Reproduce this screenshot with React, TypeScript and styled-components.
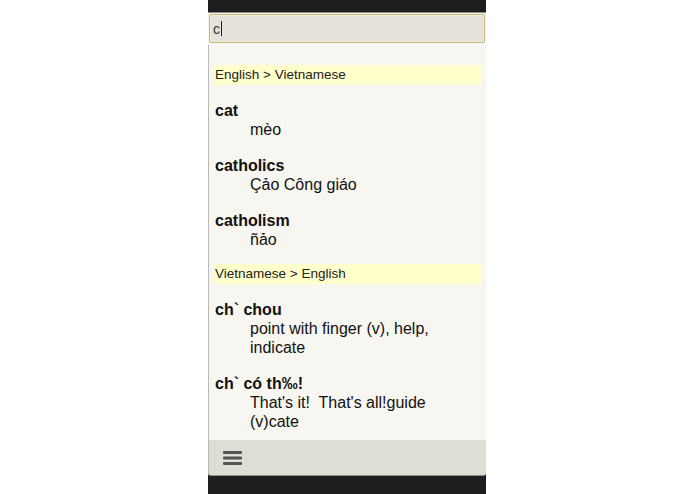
import React from "react";
import styled, { createGlobalStyle } from "styled-components";

const GlobalStyle = createGlobalStyle`
  html, body {
    margin: 0;
    padding: 0;
    background: #ffffff;
  }
  body {
    font-family: "Liberation Sans", Arial, sans-serif;
  }
`;

const Page = styled.div`
  width: 695px;
  height: 494px;
  display: flex;
  justify-content: flex-start;
`;

const Phone = styled.div`
  margin-left: 208px;
  width: 278px;
  height: 494px;
  display: flex;
  flex-direction: column;
  background: #1e1e1e;
`;

const StatusBar = styled.div`
  height: 12px;
  background: #1e1e1e;
  border-bottom: 1px solid #8a8a88;
`;

const SearchArea = styled.div`
  background: #f8f6f0;
  padding: 1px 1px 2px 1px;
`;

const SearchField = styled.div`
  height: 27px;
  border: 1px solid #c6b67a;
  box-shadow: inset 0 0 0 1px #f0ecd8;
  background: #e4e2db;
  border-radius: 2px;
  display: flex;
  align-items: center;
  padding-left: 3px;
  font-size: 14px;
  color: #333;
`;

const Caret = styled.span`
  display: inline-block;
  width: 1px;
  height: 15px;
  background: #222;
  margin-left: 1px;
`;

const Content = styled.div`
  flex: 1;
  background: #f8f6f0;
  border-left: 1px solid #b9b8b4;
  padding: 20px 5px 0 5px;
  overflow: hidden;
`;

const SectionHeader = styled.div<{ $first?: boolean }>`
  height: 20px;
  line-height: 20px;
  background: #ffffcc;
  font-size: 13.5px;
  color: #222;
  padding-left: 1px;
  margin-bottom: 16px;
  margin-top: ${(p) => (p.$first ? "0" : "15px")};
`;

const Entry = styled.div`
  & + & {
    margin-top: 17px;
  }
`;

const Word = styled.div`
  font-size: 16px;
  line-height: 19px;
  font-weight: bold;
  color: #111;
  padding-left: 1px;
`;

const Meaning = styled.div`
  font-size: 16px;
  line-height: 19px;
  color: #111;
  padding-left: 36px;
`;

const BottomBar = styled.div`
  height: 35px;
  background: #deddd6;
  border-left: 1px solid #b9b8b4;
  border-bottom: 1px solid #8e8d88;
  border-radius: 0 0 3px 3px;
  display: flex;
  align-items: center;
  padding-left: 14px;
`;

const MenuIcon = styled.svg`
  display: block;
`;

const BottomSpace = styled.div`
  height: 18px;
  background: #1e1e1e;
`;

type Item = { word: string; meaning: string[] };

const enVi: Item[] = [
  { word: "cat", meaning: ["mèo"] },
  { word: "catholics", meaning: ["Çảo Công giáo"] },
  { word: "catholism", meaning: ["ñảo"] },
];

const viEn: Item[] = [
  { word: "ch` chou", meaning: ["point with finger (v), help,", "indicate"] },
  { word: "ch` có th‰!", meaning: ["That's it!\u00a0 That's all!guide", "(v)cate"] },
];

function EntryList({ items }: { items: Item[] }) {
  return (
    <>
      {items.map((it) => (
        <Entry key={it.word}>
          <Word>{it.word}</Word>
          {it.meaning.map((m) => (
            <Meaning key={m}>{m}</Meaning>
          ))}
        </Entry>
      ))}
    </>
  );
}

export default function App() {
  return (
    <Page>
      <GlobalStyle />
      <Phone>
        <StatusBar />
        <SearchArea>
          <SearchField>
            c<Caret />
          </SearchField>
        </SearchArea>
        <Content>
          <SectionHeader $first>English &gt; Vietnamese</SectionHeader>
          <EntryList items={enVi} />
          <SectionHeader>Vietnamese &gt; English</SectionHeader>
          <EntryList items={viEn} />
        </Content>
        <BottomBar>
          <MenuIcon width="19" height="16" viewBox="0 0 19 16">
            <rect x="0" y="1" width="19" height="3" rx="1" fill="#555" />
            <rect x="0" y="6.5" width="19" height="3" rx="1" fill="#555" />
            <rect x="0" y="12" width="19" height="3" rx="1" fill="#555" />
          </MenuIcon>
        </BottomBar>
        <BottomSpace />
      </Phone>
    </Page>
  );
}
